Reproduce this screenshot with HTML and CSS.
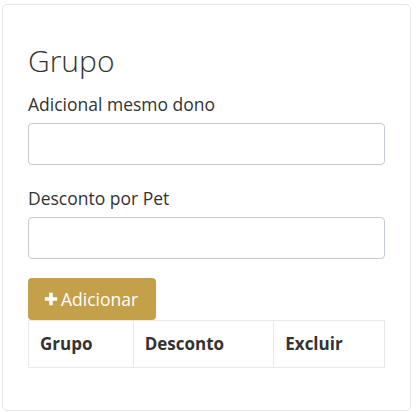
FILE: index.html
```html
<!DOCTYPE html>
<html lang="pt">
<head>
<meta charset="utf-8">
<link rel="stylesheet" href="styles.css">
</head>
<body>
<div class="card">
  <h3 class="title">Grupo</h3>
  <div class="field">
    <label class="label">Adicional mesmo dono</label>
    <input class="input" type="text">
  </div>
  <div class="field">
    <label class="label">Desconto por Pet</label>
    <input class="input" type="text">
  </div>
  <button class="btn" type="button"><svg class="plus" viewBox="0 0 14 14" width="14" height="14"><path d="M5.2 0.8h3.6v4.4h4.4v3.6H8.8v4.4H5.2V8.8H0.8V5.2h4.4z" fill="#fff"/></svg>Adicionar</button>
  <table class="table">
    <thead>
      <tr>
        <th class="c1">Grupo</th>
        <th class="c2">Desconto</th>
        <th class="c3">Excluir</th>
      </tr>
    </thead>
  </table>
</div>
</body>
</html>
```

FILE: styles.css
```css
html, body {
  margin: 0;
  padding: 0;
  background: #fff;
}
body {
  font-family: "Open Sans", "Noto Sans", sans-serif;
  color: #333;
  padding: 4px 5px 0 2px;
}
.card {
  width: 357px;
  border: 1px solid #e3e7ec;
  border-radius: 5px;
  padding: 38px 25px 42px 25px;
  height: 325px;
}
.title {
  margin: 0 0 13px 0;
  font-size: 30px;
  font-weight: 300;
  line-height: 36px;
  color: #333;
}
.field {
  margin-bottom: 21px;
}
.label {
  display: block;
  font-size: 17.5px;
  line-height: 24px;
  margin-bottom: 7px;
  color: #333;
}
.input {
  display: block;
  box-sizing: border-box;
  width: 357px;
  height: 42px;
  border: 1px solid #c5ccd8;
  border-radius: 4px;
  margin: 0;
  padding: 0 12px;
  font-family: inherit;
  font-size: 16px;
}
.field + .field {
  margin-bottom: 19px;
}
.btn {
  display: flex;
  align-items: center;
  gap: 3px;
  box-sizing: border-box;
  height: 42px;
  width: 128px;
  margin: 0;
  padding: 0 16px;
  border: none;
  border-radius: 4px;
  background: #c5a04a;
  color: #fff;
  font-family: inherit;
  font-size: 17.5px;
  line-height: 24px;
}
.plus {
  flex: none;
}
.table {
  border-collapse: collapse;
  width: 357px;
  margin: 0;
}
.table th {
  box-sizing: border-box;
  border: 1px solid #e6eaef;
  padding: 11px 11px;
  text-align: left;
  font-size: 17px;
  font-weight: 700;
  line-height: 24px;
  color: #333;
}
.c1 { width: 105px; }
.c2 { width: 141px; }
.c3 { width: 111px; }
```
